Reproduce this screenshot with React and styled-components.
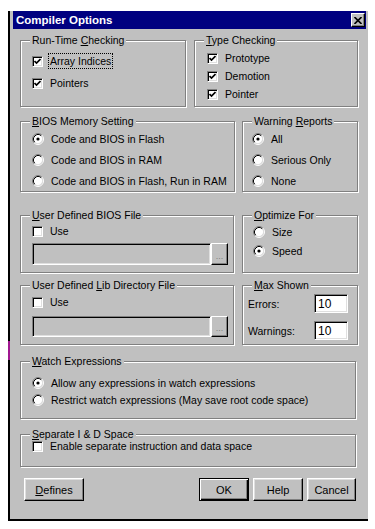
import React from "react";
import styled, { createGlobalStyle } from "styled-components";

const GlobalStyle = createGlobalStyle`
  body {
    margin: 0;
    background: #fff;
    font-family: "Liberation Sans", Arial, sans-serif;
    font-size: 10.5px;
    color: #000;
  }
`;

const Window = styled.div`
  position: relative;
  box-sizing: border-box;
  width: 360px;
  margin: 11px 0 0 8px;
  padding: 0 2px 18px 3px;
  background: #c0c0c0;
  border-left: 2px solid #000;
  border-bottom: 2px solid #000;
  &::before {
    content: "";
    position: absolute;
    left: -2px;
    top: 330px;
    width: 2px;
    height: 19px;
    background: #a01890;
  }
`;

const TitleBar = styled.div`
  height: 18px;
  background: #000080;
  color: #fff;
  display: flex;
  align-items: center;
  justify-content: space-between;
  padding: 0 1px 0 3px;
  font-weight: bold;
  font-size: 11.5px;
`;

const CloseButton = styled.div`
  box-sizing: border-box;
  width: 14px;
  height: 14px;
  background: #c0c0c0;
  border: 1px solid;
  border-color: #fff #000 #000 #fff;
  box-shadow: inset -1px -1px #808080;
  display: flex;
  align-items: center;
  justify-content: center;
`;

const Content = styled.div`
  padding-left: 7px;
`;

const Row = styled.div`
  display: flex;
  gap: ${(p) => p.$gap || 8}px;
  margin-top: ${(p) => p.$top}px;
`;

const Group = styled.div`
  box-sizing: border-box;
  width: ${(p) => p.$w}px;
  height: ${(p) => p.$h}px;
  border: 1px solid #808080;
  box-shadow: inset 1px 1px #fff, 1px 1px #fff;
`;

const Legend = styled.div`
  width: fit-content;
  margin: -7px 0 0 9px;
  padding: 0 2px;
  line-height: 13px;
  white-space: nowrap;
  background: #c0c0c0;
`;

const Items = styled.div`
  display: flex;
  flex-direction: column;
  gap: ${(p) => p.$gap || 0}px;
  margin-top: ${(p) => p.$top || 0}px;
  padding-left: ${(p) => (p.$pl === undefined ? 11 : p.$pl)}px;
  padding-right: ${(p) => p.$pr || 0}px;
`;

const Option = styled.div`
  display: flex;
  align-items: center;
  height: 16px;
  gap: 5px;
`;

const Label = styled.span`
  line-height: 14px;
  padding: 0 1px;
  white-space: nowrap;
  border: 1px ${(p) => (p.$focus ? "dotted #000" : "solid transparent")};
`;

const Box = styled.div`
  box-sizing: border-box;
  flex: none;
  width: 11px;
  height: 11px;
  background: #fff;
  border: 1px solid;
  border-color: #808080 #fff #fff #808080;
  box-shadow: inset 1px 1px #000, inset -1px -1px #dfdfdf;
  display: flex;
  align-items: center;
  justify-content: center;
`;

const u = (s) => <u>{s}</u>;

const Check = ({ checked, focus, children }) => (
  <Option>
    <Box>
      {checked && (
        <svg width="7" height="7" viewBox="0 0 7 7">
          <path d="M0.5 3 L2.5 5 L6.5 1" stroke="#000" strokeWidth="1.7" fill="none" />
        </svg>
      )}
    </Box>
    <Label $focus={focus}>{children}</Label>
  </Option>
);

const Radio = ({ checked, children }) => (
  <Option>
    <svg width="12" height="12" viewBox="0 0 12 12" style={{ flex: "none" }}>
      <circle cx="6" cy="6" r="4.5" fill="#fff" />
      <path d="M2.11 9.89 A5.5 5.5 0 0 1 9.89 2.11" stroke="#808080" fill="none" />
      <path d="M9.89 2.11 A5.5 5.5 0 0 1 2.11 9.89" stroke="#fff" fill="none" />
      <path d="M2.82 9.18 A4.5 4.5 0 0 1 9.18 2.82" stroke="#000" fill="none" />
      <path d="M9.18 2.82 A4.5 4.5 0 0 1 2.82 9.18" stroke="#dfdfdf" fill="none" />
      {checked && <circle cx="6" cy="6" r="1.6" fill="#000" />}
    </svg>
    <Label>{children}</Label>
  </Option>
);

const FileRow = styled.div`
  display: flex;
  margin-top: ${(p) => p.$top}px;
  padding-left: 11px;
`;

const Edit = styled.div`
  box-sizing: border-box;
  width: ${(p) => p.$w}px;
  height: ${(p) => p.$h}px;
  background: ${(p) => (p.$white ? "#fff" : "#c0c0c0")};
  border: 1px solid;
  border-color: #808080 #fff #fff #808080;
  box-shadow: inset 1px 1px #000, inset -1px -1px #dfdfdf;
  padding: 0 0 0 3px;
  display: flex;
  align-items: center;
  font-size: 12px;
`;

const Browse = styled.div`
  box-sizing: border-box;
  width: 17px;
  height: ${(p) => p.$h}px;
  background: #c0c0c0;
  border: 1px solid;
  border-color: #fff #000 #000 #fff;
  box-shadow: inset -1px -1px #808080;
  display: flex;
  align-items: flex-end;
  justify-content: center;
  padding-bottom: 3px;
  color: #808080;
  font-size: 9px;
  line-height: 9px;
`;

const CountRow = styled.div`
  display: flex;
  align-items: center;
  justify-content: space-between;
  height: 19px;
`;

const Footer = styled.div`
  display: flex;
  justify-content: space-between;
  margin-top: 11px;
  padding-left: 11px;
  padding-right: 10px;
`;

const ButtonGroup = styled.div`
  display: flex;
  gap: 4px;
`;

const Button = styled.div`
  box-sizing: border-box;
  width: ${(p) => p.$w}px;
  height: 23px;
  background: #c0c0c0;
  border: 1px solid;
  border-color: ${(p) => (p.$default ? "#000" : "#fff #000 #000 #fff")};
  box-shadow: ${(p) =>
    p.$default
      ? "inset 1px 1px #fff, inset -1px -1px #000, inset -2px -2px #808080"
      : "inset -1px -1px #808080, inset 1px 1px #dfdfdf"};
  display: flex;
  align-items: center;
  justify-content: center;
  font-size: 11px;
`;

export default function App() {
  return (
    <>
      <GlobalStyle />
      <Window>
        <TitleBar>
          <span>Compiler Options</span>
          <CloseButton>
            <svg width="8" height="7" viewBox="0 0 8 7">
              <path d="M0.5 0 L7.5 7 M7.5 0 L0.5 7" stroke="#000" strokeWidth="1.6" />
            </svg>
          </CloseButton>
        </TitleBar>
        <Content>
          <Row $top={11} $gap={8}>
            <Group $w={166} $h={67}>
              <Legend>Run-Time {u("C")}hecking</Legend>
              <Items $top={6} $gap={6}>
                <Check checked focus>Array Indices</Check>
                <Check checked>Pointers</Check>
              </Items>
            </Group>
            <Group $w={164} $h={67}>
              <Legend>{u("T")}ype Checking</Legend>
              <Items $top={3} $gap={2} $pl={12}>
                <Check checked>Prototype</Check>
                <Check checked>Demotion</Check>
                <Check checked>Pointer</Check>
              </Items>
            </Group>
          </Row>

          <Row $top={14} $gap={7}>
            <Group $w={215} $h={71}>
              <Legend>{u("B")}IOS Memory Setting</Legend>
              <Items $top={3} $gap={5}>
                <Radio checked>Code and BIOS in Flash</Radio>
                <Radio>Code and BIOS in RAM</Radio>
                <Radio>Code and BIOS in Flash, Run in RAM</Radio>
              </Items>
            </Group>
            <Group $w={116} $h={71}>
              <Legend>Warning {u("R")}eports</Legend>
              <Items $top={3} $gap={5} $pl={9}>
                <Radio checked>All</Radio>
                <Radio>Serious Only</Radio>
                <Radio>None</Radio>
              </Items>
            </Group>
          </Row>

          <Row $top={23} $gap={8}>
            <Group $w={214} $h={58}>
              <Legend>{u("U")}ser Defined BIOS File</Legend>
              <Items $top={1}>
                <Check>Use</Check>
              </Items>
              <FileRow $top={4}>
                <Edit $w={179} $h={22} />
                <Browse $h={22}>...</Browse>
              </FileRow>
            </Group>
            <Group $w={116} $h={58}>
              <Legend>{u("O")}ptimize For</Legend>
              <Items $top={2} $gap={3} $pl={10}>
                <Radio>Size</Radio>
                <Radio checked>Speed</Radio>
              </Items>
            </Group>
          </Row>

          <Row $top={12} $gap={8}>
            <Group $w={214} $h={60}>
              <Legend>User Defined {u("L")}ib Directory File</Legend>
              <Items $top={2}>
                <Check>Use</Check>
              </Items>
              <FileRow $top={6}>
                <Edit $w={179} $h={21} />
                <Browse $h={21}>...</Browse>
              </FileRow>
            </Group>
            <Group $w={116} $h={60}>
              <Legend>{u("M")}ax Shown</Legend>
              <Items $top={2} $gap={8} $pl={5} $pr={9}>
                <CountRow>
                  <span>Errors:</span>
                  <Edit $w={34} $h={19} $white>10</Edit>
                </CountRow>
                <CountRow>
                  <span>Warnings:</span>
                  <Edit $w={34} $h={19} $white>10</Edit>
                </CountRow>
              </Items>
            </Group>
          </Row>

          <Row $top={16}>
            <Group $w={336} $h={58}>
              <Legend>{u("W")}atch Expressions</Legend>
              <Items $top={7} $gap={1}>
                <Radio checked>Allow any expressions in watch expressions</Radio>
                <Radio>Restrict watch expressions (May save root code space)</Radio>
              </Items>
            </Group>
          </Row>

          <Row $top={15}>
            <Group $w={336} $h={33}>
              <Legend>{u("S")}eparate I &amp; D Space</Legend>
              <Items $top={-3}>
                <Check>Enable separate instruction and data space</Check>
              </Items>
            </Group>
          </Row>
        </Content>

        <Footer>
          <Button $w={60}>{u("D")}efines</Button>
          <ButtonGroup>
            <Button $w={50} $default>OK</Button>
            <Button $w={50}>Help</Button>
            <Button $w={49}>Cancel</Button>
          </ButtonGroup>
        </Footer>
      </Window>
    </>
  );
}
